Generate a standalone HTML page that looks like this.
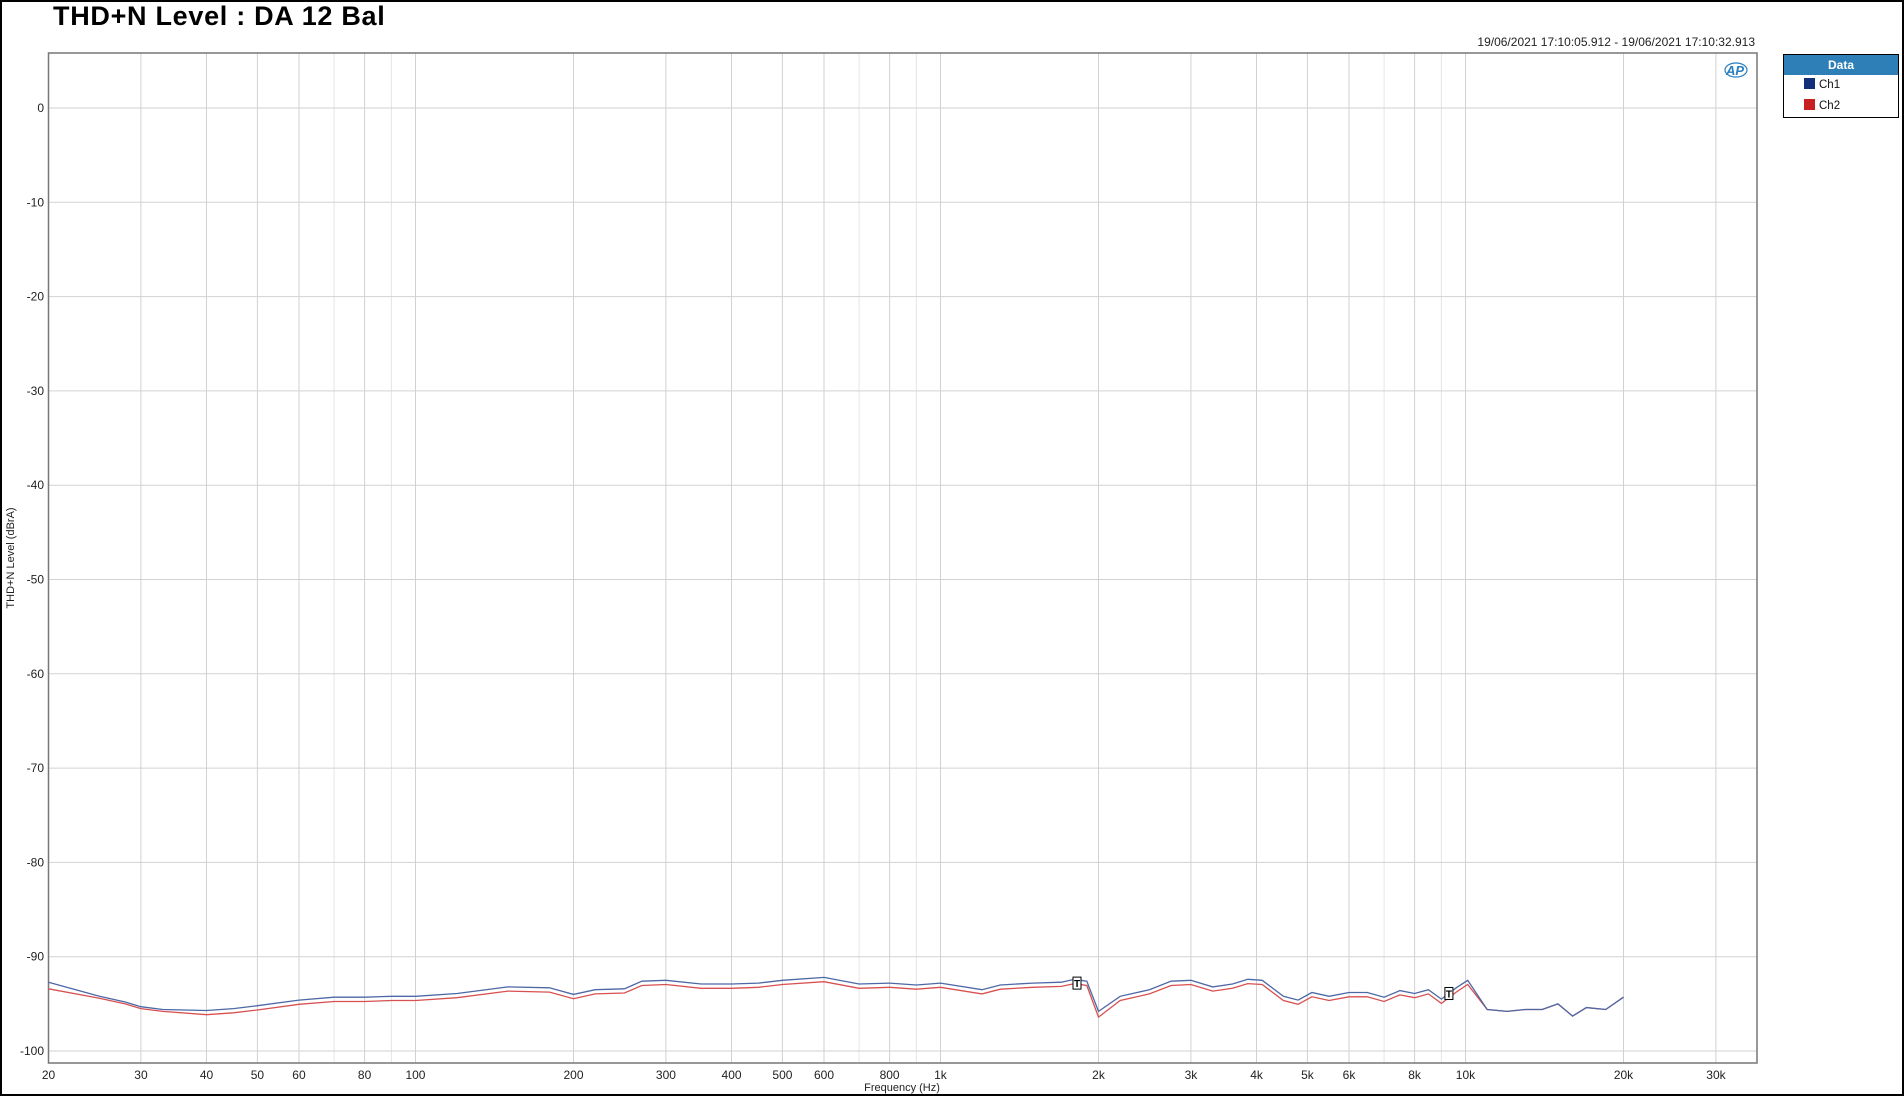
<!DOCTYPE html>
<html><head><meta charset="utf-8"><style>
html,body{margin:0;padding:0;background:#fff;}
body{width:1904px;height:1096px;position:relative;overflow:hidden;font-family:"Liberation Sans",Arial,sans-serif;}
#frame{position:absolute;left:0;top:0;width:1900px;height:1092px;border:2px solid #000;}
#title{position:absolute;left:53px;top:1px;font:bold 27px "Liberation Sans",Arial,sans-serif;color:#000;letter-spacing:0.7px;}
#ts{position:absolute;right:149px;top:35px;font-size:12px;color:#222;}
#legend{position:absolute;left:1783px;top:54px;width:114px;height:62px;border:1px solid #000;background:#fff;}
#legend .h{background:#2e7fb8;color:#fff;font-weight:bold;font-size:12px;text-align:center;height:20px;line-height:20px;}
#legend .r{font-size:11.5px;height:21px;line-height:21px;padding-left:20px;color:#111;}
#legend .r span{display:inline-block;width:11px;height:11px;vertical-align:-1px;margin-right:4px;}
svg{position:absolute;left:0;top:0;font-family:"Liberation Sans",Arial,sans-serif;}
</style></head><body>
<div id="frame"></div>
<div id="title">THD+N Level : DA 12 Bal</div>
<div id="ts">19/06/2021 17:10:05.912 - 19/06/2021 17:10:32.913</div>
<div id="legend"><div class="h">Data</div>
<div class="r"><span style="background:#12307a"></span>Ch1</div>
<div class="r"><span style="background:#c82020"></span>Ch2</div></div>
<svg id="g" width="1904" height="1096" xmlns="http://www.w3.org/2000/svg"></svg>
<script>
var s=document.getElementById('g'),h='';
var L=48.5,R=1757,T=53,B=1063;
function X(f){return 48.5+525*Math.log10(f/20);}
function Y(d){return 108-9.43*d;}
var fs=[];
[10,100,1000,10000].forEach(function(d){for(var k=1;k<10;k++){var f=k*d;if(f>=20&&f<=30000)fs.push(f);}});
fs.forEach(function(f){var x=X(f).toFixed(1);h+='<line x1="'+x+'" y1="'+T+'" x2="'+x+'" y2="'+B+'" stroke="'+((f==70||f==90||f==700||f==900||f==7000||f==9000)?'#e6e6e6':'#d2d2d2')+'" stroke-width="1"/>';});
for(var d=0;d>=-100;d-=10){var y=Y(d).toFixed(1);h+='<line x1="'+L+'" y1="'+y+'" x2="'+R+'" y2="'+y+'" stroke="#d2d2d2"/>';h+='<text x="44" y="'+(Y(d)+4)+'" text-anchor="end" font-size="12" fill="#222">'+d+'</text>';}
h+='<rect x="'+L+'" y="'+T+'" width="'+(R-L)+'" height="'+(B-T)+'" fill="none" stroke="#777" stroke-width="1.5"/>';
var lab=[[20,'20'],[30,'30'],[40,'40'],[50,'50'],[60,'60'],[80,'80'],[100,'100'],[200,'200'],[300,'300'],[400,'400'],[500,'500'],[600,'600'],[800,'800'],[1000,'1k'],[2000,'2k'],[3000,'3k'],[4000,'4k'],[5000,'5k'],[6000,'6k'],[8000,'8k'],[10000,'10k'],[20000,'20k'],[30000,'30k']];
lab.forEach(function(a){h+='<text x="'+X(a[0])+'" y="1079" text-anchor="middle" font-size="12" fill="#222">'+a[1]+'</text>';});
h+='<text x="902" y="1091" text-anchor="middle" font-size="11" fill="#222">Frequency (Hz)</text>';
h+='<text transform="translate(14,558) rotate(-90)" text-anchor="middle" font-size="11" fill="#222">THD+N Level (dBrA)</text>';
var c1=[[20,-92.7],[25,-94.2],[28,-94.8],[30,-95.3],[33,-95.6],[40,-95.7],[45,-95.5],[50,-95.2],[60,-94.6],[70,-94.3],[80,-94.3],[90,-94.2],[100,-94.2],[120,-93.9],[150,-93.2],[180,-93.3],[200,-94],[220,-93.5],[250,-93.4],[270,-92.6],[300,-92.5],[350,-92.9],[400,-92.9],[450,-92.8],[500,-92.5],[600,-92.2],[700,-92.9],[800,-92.8],[900,-93.0],[1000,-92.8],[1200,-93.5],[1300,-93.0],[1500,-92.8],[1700,-92.7],[1800,-92.4],[1900,-92.6],[2000,-95.8],[2200,-94.2],[2500,-93.5],[2750,-92.6],[3000,-92.5],[3300,-93.2],[3600,-92.9],[3850,-92.4],[4100,-92.5],[4500,-94.2],[4800,-94.6],[5100,-93.8],[5500,-94.2],[6000,-93.8],[6500,-93.8],[7000,-94.3],[7500,-93.6],[8000,-93.9],[8500,-93.5],[9000,-94.5],[9600,-93.3],[10100,-92.5],[11000,-95.6],[12000,-95.8],[13000,-95.6],[14000,-95.6],[15000,-95.0],[16000,-96.3],[17000,-95.4],[18500,-95.6],[20000,-94.3]];
var c2=c1.map(function(p){var o=p[0]<40?-0.2:(p[0]>10500?0:-0.45);if(p[0]==2000)o=-0.6;return [p[0],p[1]+o];});
c2[0][1]=-93.4;
function path(c,col){return '<polyline fill="none" stroke="'+col+'" stroke-width="1.3" points="'+c.map(function(p){return X(p[0]).toFixed(1)+','+Y(p[1]).toFixed(1);}).join(' ')+'"/>';}
h+=path(c2,'#d85050')+path(c1,'#4d68a6');
function mk(f,d){var x=X(f),y=Y(d);h+='<rect x="'+(x-4)+'" y="'+(y-6)+'" width="8" height="12" fill="#fff" stroke="#000"/><text x="'+x+'" y="'+(y+4)+'" text-anchor="middle" font-size="10" font-weight="bold">T</text>';}
mk(1820,-92.8);mk(9300,-93.9);
h+='<text x="1735" y="75" font-size="13" font-style="italic" font-weight="bold" fill="#2a7fc0" text-anchor="middle">AP</text>';
h+='<ellipse cx="1736" cy="70" rx="11" ry="7" fill="none" stroke="#2a7fc0" stroke-width="1.2"/>';
s.innerHTML=h;
</script>
</body></html>
